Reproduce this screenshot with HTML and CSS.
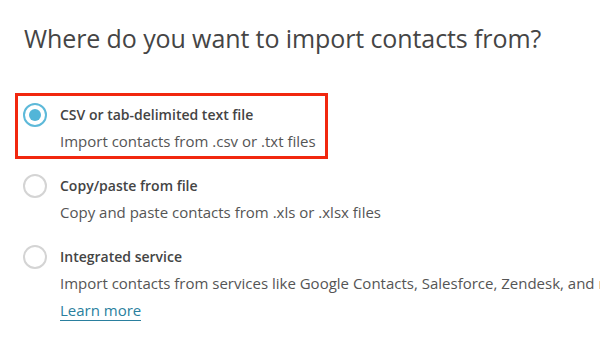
FILE: index.html
```html
<!DOCTYPE html>
<html lang="en">

<head>
    <meta charset="UTF-8">
    <title>Import contacts</title>
    <link rel="stylesheet" href="styles.css">
</head>

<body>

    <div class="page">
        <h1 class="title">Where do you want to import contacts from?</h1>

        <div class="options">
            <label class="option selected">
                <span class="radio"></span>
                <span class="text">
                    <span class="label">CSV or tab-delimited text file</span>
                    <span class="desc">Import contacts from .csv or .txt files</span>
                </span>
            </label>

            <label class="option">
                <span class="radio"></span>
                <span class="text">
                    <span class="label">Copy/paste from file</span>
                    <span class="desc">Copy and paste contacts from .xls or .xlsx files</span>
                </span>
            </label>

            <label class="option">
                <span class="radio"></span>
                <span class="text">
                    <span class="label">Integrated service</span>
                    <span class="desc">Import contacts from services like Google Contacts, Salesforce, Zendesk, and more</span>
                    <a class="learn" href="#">Learn more</a>
                </span>
            </label>
        </div>
    </div>

</body>

</html>
```

FILE: styles.css
```css
body {
    margin: 0;
    padding: 0;
    font-family: "Open Sans", sans-serif;
    background-color: #fff;
    color: #444;
    overflow: hidden;
}

.page {
    padding: 20px 0 0 24px;
    white-space: nowrap;
}

.title {
    margin: 0;
    font-size: 25px;
    font-weight: 400;
    letter-spacing: -0.1px;
    line-height: 36px;
    color: #454545;
}

.options {
    display: flex;
    flex-direction: column;
    gap: 5px;
    margin-top: 37px;
    margin-left: -9px;
}

.option {
    display: flex;
    align-items: flex-start;
    gap: 13px;
    padding: 6px 9px 2px 5px;
    border: 3px solid transparent;
    align-self: flex-start;
}

.option.selected {
    border-color: #f1270f;
}

.radio {
    flex: none;
    width: 20px;
    height: 20px;
    margin-top: 1px;
    border: 2px solid #d4d4d4;
    border-radius: 50%;
    box-sizing: content-box;
    position: relative;
}

.selected .radio {
    border-color: #5db9d9;
}

.selected .radio::after {
    content: "";
    position: absolute;
    top: 4px;
    left: 4px;
    width: 12px;
    height: 12px;
    border-radius: 50%;
    background-color: #52b5d8;
}

.text {
    display: flex;
    flex-direction: column;
    font-size: 15px;
    line-height: 26px;
}

.label {
    font-size: 14px;
    font-weight: 600;
    color: #444;
}

.desc {
    color: #555;
}

.learn {
    align-self: flex-start;
    margin-top: 4px;
    color: #2a7f9e;
    text-decoration: none;
    border-bottom: 1px solid #2a7f9e;
    line-height: 20px;
}
```
